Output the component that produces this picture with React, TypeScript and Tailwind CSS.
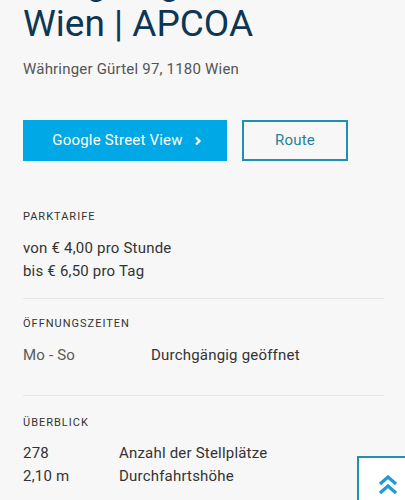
import React from "react";

export default function App() {
  return (
    <div
      className="min-h-[500px] w-[405px] overflow-hidden bg-[#f7f7f7] pl-[23px] pr-[21px] relative"
      style={{ fontFamily: "Roboto, 'Liberation Sans', sans-serif" }}
    >
      <h1 className="mt-[-39px] text-[37px] leading-[42px] font-normal text-[#0c3654]">
        <span className="block">Tiefgarage Gürtel</span>
        <span className="block">Wien | APCOA</span>
      </h1>
      <p className="mt-[14px] text-[15px] leading-[20px] tracking-[0.2px] text-[#555555]">
        Währinger Gürtel 97, 1180 Wien
      </p>
      <div className="mt-[41px] flex gap-[15px]">
        <button className="flex h-[41px] w-[204px] items-center justify-center gap-[11px] pl-[4px] bg-[#00a8e6] text-[15px] tracking-[0.2px] text-white">
          <span>Google Street View</span>
          <svg width="8" height="10" viewBox="0 0 8 10" className="mt-[1px]">
            <path d="M2 1.5 L5.5 5 L2 8.5" fill="none" stroke="white" strokeWidth="2.2" />
          </svg>
        </button>
        <button className="flex h-[41px] w-[106px] items-center justify-center border-2 border-[#1f8fb3] text-[15px] tracking-[0.2px] text-[#2a7f9b]">
          Route
        </button>
      </div>

      <section className="mt-[48px] border-b border-[#e6e6e6] pb-[15px]">
        <h2 className="text-[11px] leading-[16px] tracking-[1px] text-[#333333]">PARKTARIFE</h2>
        <div className="mt-[12px] text-[15px] leading-[23px] tracking-[0.2px] text-[#333333]">
          <p>von € 4,00 pro Stunde</p>
          <p>bis € 6,50 pro Tag</p>
        </div>
      </section>

      <section className="pt-[17px] border-b border-[#e6e6e6] pb-[28px]">
        <h2 className="text-[11px] leading-[16px] tracking-[1px] text-[#333333]">ÖFFNUNGSZEITEN</h2>
        <div className="mt-[12px] flex text-[15px] leading-[23px] tracking-[0.2px]">
          <span className="w-[128px] text-[#5a5a5a]">Mo - So</span>
          <span className="text-[#333333]">Durchgängig geöffnet</span>
        </div>
      </section>

      <section className="pt-[19px]">
        <h2 className="text-[11px] leading-[16px] tracking-[1px] text-[#333333]">ÜBERBLICK</h2>
        <div className="mt-[11px] text-[15px] leading-[23px] tracking-[0.2px] text-[#333333]">
          <div className="flex">
            <span className="w-[96px]">278</span>
            <span>Anzahl der Stellplätze</span>
          </div>
          <div className="flex">
            <span className="w-[96px]">2,10 m</span>
            <span>Durchfahrtshöhe</span>
          </div>
        </div>
      </section>

      <button className="absolute left-[357px] top-[456px] flex h-[56px] w-[56px] items-start justify-start border-2 border-[#1f8fb3] bg-white">
        <svg width="22" height="20" viewBox="0 0 22 20" className="ml-[18px] mt-[17px]">
          <path d="M3 9 L11 2 L19 9" fill="none" stroke="#1e9bd7" strokeWidth="3.2" />
          <path d="M3 18 L11 11 L19 18" fill="none" stroke="#1e9bd7" strokeWidth="3.2" />
        </svg>
      </button>
    </div>
  );
}
